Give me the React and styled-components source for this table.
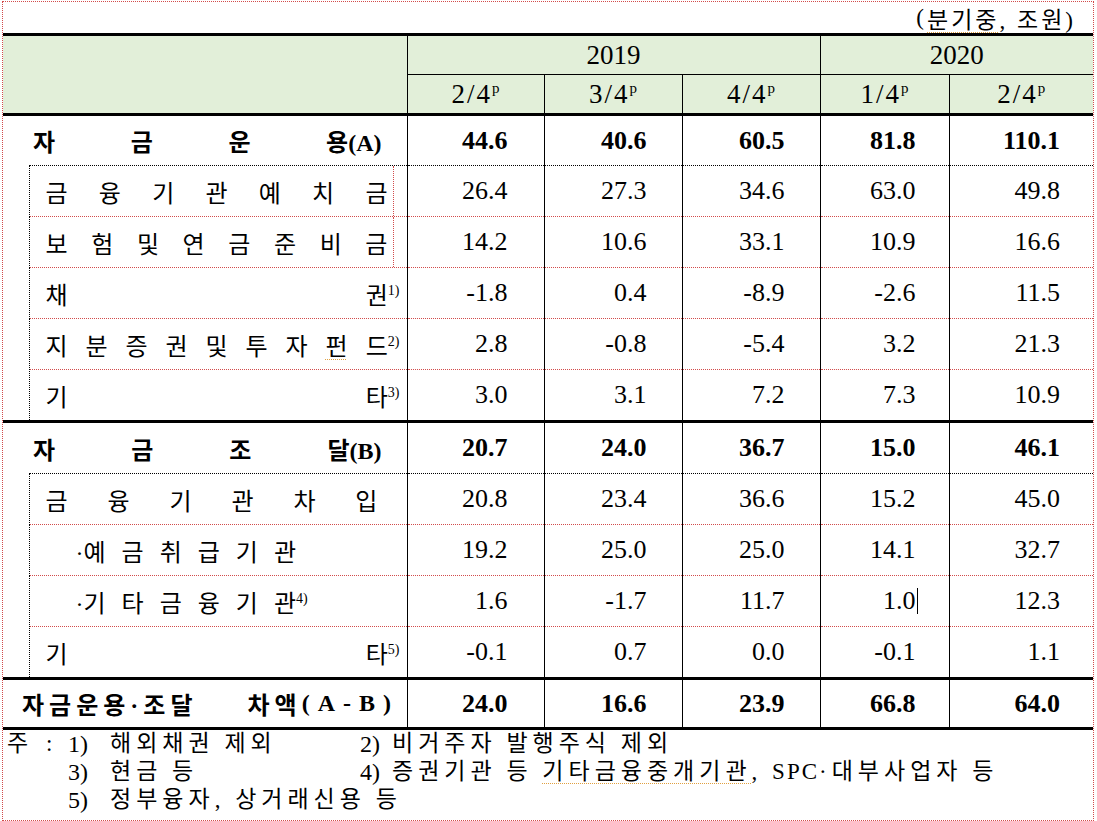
import React from "react";
import styled, { createGlobalStyle } from "styled-components";

const FONT = `"Liberation Serif", "Noto Sans CJK KR", serif`;
const RED_DOT = "1px dotted #d24b4b";
const BLACK_DOT = "1px dotted #000";
const THICK = "3px solid #000";
const THIN = "1px solid #000";
const GREEN = "#e2efd9";

const GlobalStyle = createGlobalStyle`
  html, body { margin: 0; padding: 0; background: #fff; }
  body { font-family: ${FONT}; color: #000; }
`;

const Page = styled.div`
  box-sizing: border-box;
  width: 1092px;
  height: 820px;
  margin: 1px 0 0 2px;
  border: 1px dotted #d24b4b;
  display: flex;
  flex-direction: column;
`;

const Unit = styled.div`
  height: 31px;
  display: flex;
  align-items: center;
  justify-content: flex-end;
  padding-right: 17px;
  font-size: 23px;
  letter-spacing: 3px;
`;

const Squiggle = styled.span`
  text-decoration: underline dotted #e0a040;
  text-decoration-thickness: 1px;
  text-underline-offset: 4px;
`;

const Table = styled.table`
  width: 1090px;
  border-collapse: collapse;
  table-layout: fixed;
  border-top: ${THICK};
`;

const Col = styled.col`
  width: ${(p) => p.$w}px;
`;

const HeadCell = styled.th`
  background: ${GREEN};
  font-weight: normal;
  font-size: 27px;
  padding: 0;
  height: ${(p) => p.$h}px;
  text-align: center;
  letter-spacing: ${(p) => p.$ls || 0}px;
  border-left: ${(p) => (p.$blank ? "none" : THIN)};
  border-bottom: ${(p) => (p.$thick ? THICK : THIN)};
`;

const Sup = styled.sup`
  font-size: ${(p) => p.$size || 14}px;
  line-height: 0;
  vertical-align: ${(p) => p.$raise || 9}px;
  letter-spacing: 0;
  margin-right: ${(p) => p.$hang || 0}px;
`;

const GroupLabel = styled.td`
  padding: 0 25px 0 30px;
  border-top: ${THICK};
  border-bottom: none;
`;

const GroupSpread = styled.div`
  height: ${(p) => p.$h}px;
  display: flex;
  align-items: center;
  justify-content: space-between;
  font-size: 24px;
  font-weight: 700;
  white-space: nowrap;
`;

const Indent = styled.td`
  padding: 0;
  border-right: ${BLACK_DOT};
  border-bottom: ${THICK};
`;

const LabelCell = styled.td`
  padding: 0 13px 0 16px;
  border-top: ${(p) => (p.$first ? BLACK_DOT : "none")};
  border-bottom: ${(p) => (p.$last ? THICK : RED_DOT)};
`;

const Spread = styled.div`
  box-sizing: border-box;
  height: 50px;
  display: flex;
  align-items: center;
  justify-content: space-between;
  padding-right: ${(p) => 5 + (p.$trail || 0)}px;
  border-right: 1px dotted ${(p) => (p.$framed ? "#d24b4b" : "transparent")};
  font-size: 24px;
  white-space: nowrap;
`;

const Spaced = styled.div`
  height: 50px;
  display: flex;
  align-items: center;
  gap: 16px;
  padding-left: 30px;
  font-size: 24px;
  white-space: nowrap;
`;

const Num = styled.td`
  padding: 0 ${(p) => p.$pr}px 0 0;
  text-align: right;
  font-size: 26px;
  font-weight: ${(p) => (p.$bold ? 700 : 400)};
  border-left: ${THIN};
  border-top: ${(p) => p.$top || "none"};
  border-bottom: ${(p) => p.$bottom || "none"};
  white-space: nowrap;
`;

const Caret = styled.span`
  display: inline-block;
  width: 1px;
  height: 26px;
  background: #000;
  vertical-align: -5px;
  margin-left: 1px;
  margin-right: -2px;
`;

const FinalLabel = styled.td`
  padding: 0 0 0 19px;
  border-top: ${THICK};
  border-bottom: ${THICK};
`;

const FinalText = styled.div`
  height: 47px;
  display: flex;
  align-items: center;
  font-size: 24px;
  font-weight: 700;
  letter-spacing: 5px;
  white-space: pre;
`;

const Latin = styled.span`
  letter-spacing: ${(p) => p.$ls}px;
`;

const Gap = styled.span`
  display: inline-block;
  width: ${(p) => p.$w}px;
`;

const Notes = styled.div`
  display: grid;
  grid-template-columns: 55px 30px 267px 25px 1fr;
  font-size: 23px;
  line-height: 28px;
  letter-spacing: 5px;
  word-spacing: -1px;
  white-space: pre;
`;

const NoteHead = styled.div`
  padding-left: 4px;
  letter-spacing: 4px;
  word-spacing: 4px;
`;

const Marker = styled.div`
  text-align: right;
  letter-spacing: 0;
  font-size: 24px;
`;

const NoteText = styled.div`
  padding-left: ${(p) => p.$pl}px;
  grid-column: ${(p) => p.$span || "auto"};
`;

const PAD = [36, 35, 35, 33, 33];

const groups = [
  {
    key: "A",
    label: ["자", "금", "운", "용(A)"],
    h: 49,
    values: ["44.6", "40.6", "60.5", "81.8", "110.1"],
    items: [
      { type: "spread", chars: ["금", "융", "기", "관", "예", "치", "금"], framed: true, values: ["26.4", "27.3", "34.6", "63.0", "49.8"] },
      { type: "spread", chars: ["보", "험", "및", "연", "금", "준", "비", "금"], framed: true, values: ["14.2", "10.6", "33.1", "10.9", "16.6"] },
      { type: "spread", chars: ["채", "권"], note: "1)", values: ["-1.8", "0.4", "-8.9", "-2.6", "11.5"] },
      { type: "spread", chars: ["지", "분", "증", "권", "및", "투", "자", "펀", "드"], squiggle: 7, note: "2)", values: ["2.8", "-0.8", "-5.4", "3.2", "21.3"] },
      { type: "spread", chars: ["기", "타"], note: "3)", values: ["3.0", "3.1", "7.2", "7.3", "10.9"] },
    ],
  },
  {
    key: "B",
    label: ["자", "금", "조", "달(B)"],
    h: 50,
    values: ["20.7", "24.0", "36.7", "15.0", "46.1"],
    items: [
      { type: "spread", chars: ["금", "융", "기", "관", "차", "입"], trail: 10, values: ["20.8", "23.4", "36.6", "15.2", "45.0"] },
      { type: "sub", chars: ["·예", "금", "취", "급", "기", "관"], values: ["19.2", "25.0", "25.0", "14.1", "32.7"] },
      { type: "sub", chars: ["·기", "타", "금", "융", "기", "관"], note: "4)", values: ["1.6", "-1.7", "11.7", "1.0", "12.3"], caret: 3 },
      { type: "spread", chars: ["기", "타"], note: "5)", values: ["-0.1", "0.7", "0.0", "-0.1", "1.1"] },
    ],
  },
];

function renderChars(item) {
  return item.chars.map((c, i) => {
    const last = i === item.chars.length - 1;
    const text = item.squiggle === i ? <Squiggle>{c}</Squiggle> : c;
    return (
      <span key={i}>
        {text}
        {last && item.note ? (
          <Sup $hang={item.type === "spread" ? -12 : 0}>{item.note}</Sup>
        ) : null}
      </span>
    );
  });
}

function Group({ group }) {
  const n = group.items.length;
  return (
    <>
      <tr>
        <GroupLabel colSpan={2}>
          <GroupSpread $h={group.h}>
            {group.label.map((c, i) => (
              <span key={i}>{c}</span>
            ))}
          </GroupSpread>
        </GroupLabel>
        {group.values.map((v, i) => (
          <Num key={i} $bold $pr={PAD[i]} $top={THICK} $bottom={BLACK_DOT}>
            {v}
          </Num>
        ))}
      </tr>
      {group.items.map((item, r) => {
        const first = r === 0;
        const last = r === n - 1;
        return (
          <tr key={r}>
            {first ? <Indent rowSpan={n} /> : null}
            <LabelCell $first={first} $last={last}>
              {item.type === "spread" ? (
                <Spread $framed={item.framed} $trail={item.trail}>
                  {renderChars(item)}
                </Spread>
              ) : (
                <Spaced>{renderChars(item)}</Spaced>
              )}
            </LabelCell>
            {item.values.map((v, i) => (
              <Num key={i} $pr={PAD[i]} $bottom={last ? THICK : RED_DOT}>
                {v}
                {item.caret === i ? <Caret /> : null}
              </Num>
            ))}
          </tr>
        );
      })}
    </>
  );
}

export default function App() {
  return (
    <>
      <GlobalStyle />
      <Page>
        <Unit>
          (<Squiggle>분기중</Squiggle>, 조원)
        </Unit>
        <Table>
          <colgroup>
            <Col $w={26} />
            <Col $w={378} />
            <Col $w={137} />
            <Col $w={138} />
            <Col $w={138} />
            <Col $w={129} />
            <Col $w={144} />
          </colgroup>
          <thead>
            <tr>
              <HeadCell colSpan={2} rowSpan={2} $blank $thick />
              <HeadCell colSpan={3} $h={38}>2019</HeadCell>
              <HeadCell colSpan={2} $h={38}>2020</HeadCell>
            </tr>
            <tr>
              {["2/4", "3/4", "4/4", "1/4", "2/4"].map((q, i) => (
                <HeadCell key={i} $h={38} $thick $ls={2}>
                  {q}
                  <Sup $size={15} $raise={10}>p</Sup>
                </HeadCell>
              ))}
            </tr>
          </thead>
          <tbody>
            {groups.map((g) => (
              <Group key={g.key} group={g} />
            ))}
            <tr>
              <FinalLabel colSpan={2}>
                <FinalText>
                  자금운용·조달<Gap $w={50} />차액<Latin $ls={8}>(A-B)</Latin>
                </FinalText>
              </FinalLabel>
              {["24.0", "16.6", "23.9", "66.8", "64.0"].map((v, i) => (
                <Num key={i} $bold $pr={PAD[i]} $top={THICK} $bottom={THICK}>
                  {v}
                </Num>
              ))}
            </tr>
          </tbody>
        </Table>
        <Notes>
          <NoteHead>주 :</NoteHead>
          <Marker>1)</Marker>
          <NoteText $pl={22}>해외채권 제외</NoteText>
          <Marker>2)</Marker>
          <NoteText $pl={12}>비거주자 발행주식 제외</NoteText>

          <div />
          <Marker>3)</Marker>
          <NoteText $pl={22}>현금 등</NoteText>
          <Marker>4)</Marker>
          <NoteText $pl={12}>
            증권기관 등 <Squiggle>기타금융중개기관</Squiggle>, <Latin $ls={2}>SPC</Latin>·대부사업자 등
          </NoteText>

          <div />
          <Marker>5)</Marker>
          <NoteText $pl={22} $span="3 / 6">정부융자, 상거래신용 등</NoteText>
        </Notes>
      </Page>
    </>
  );
}
